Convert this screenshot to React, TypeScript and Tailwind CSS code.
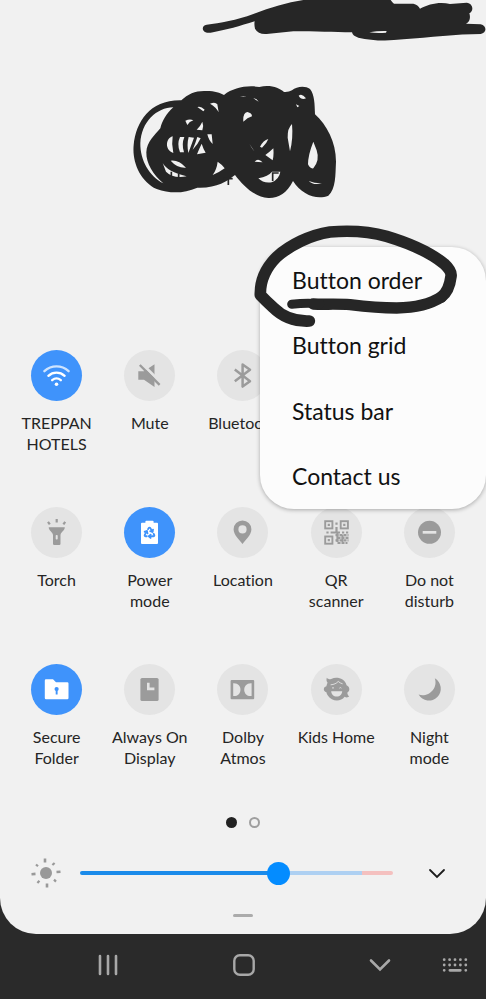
import { useState, type ReactNode } from "react";
import { Recycle } from "lucide-react";

type Tile = {
  id: string;
  label: string;
  on?: boolean;
  icon: ReactNode;
};

const tiles: Tile[] = [
  {
    id: "wifi",
    label: "TREPPAN\nHOTELS",
    on: true,
    icon: (
      <g fill="none" stroke="white" strokeWidth="2.4" strokeLinecap="round">
        <path d="M13.4 21.2C20.5 14.8 30.5 14.8 37.6 21.2" opacity="0.75" />
        <path d="M17.4 25.8C22 21.6 29 21.6 33.6 25.8" />
        <path d="M21.2 30.2C23.8 28 27.2 28 29.8 30.2" />
        <circle cx="25.5" cy="34.3" r="1.8" fill="white" stroke="none" />
      </g>
    ),
  },
  {
    id: "mute",
    label: "Mute",
    icon: (
      <g>
        <path d="M14.3 21.3H20L30.5 14.2V37L20 29.7H14.3Z" fill="#9b9b9b" />
        <path d="M17.5 13.3L37.5 33.3" stroke="#e4e4e4" strokeWidth="3" />
        <path d="M15.8 15L35.6 34.8" stroke="#9b9b9b" strokeWidth="2.4" />
      </g>
    ),
  },
  {
    id: "bluetooth",
    label: "Bluetooth",
    icon: (
      <path
        d="M17.8 19.5L33 31.3L25.6 36.6V14.4L33 19.7L17.8 31.3"
        fill="none"
        stroke="#9b9b9b"
        strokeWidth="2.5"
        strokeLinejoin="round"
      />
    ),
  },
  {
    id: "torch",
    label: "Torch",
    icon: (
      <g fill="#9b9b9b">
        <path d="M17.7 20.3H33.8C33.8 24 29.7 25 29.5 28V36.8Q29.5 38 28.3 38H23.2Q22 38 22 36.8V28C21.8 25 17.7 24 17.7 20.3Z" />
        <rect x="24.7" y="28" width="2" height="4.5" rx="0.8" fill="#e4e4e4" />
        <path
          d="M17 14.8L18.8 17.4M25.7 12V15.6M34.2 14.8L32.4 17.4"
          stroke="#9b9b9b"
          strokeWidth="2.2"
        />
      </g>
    ),
  },
  {
    id: "power",
    label: "Power\nmode",
    on: true,
    icon: (
      <g>
        <path
          d="M18 15.7H21.4V14.6Q21.4 13.7 22.3 13.7H28.7Q29.6 13.7 29.6 14.6V15.7H33Q34 15.7 34 16.7V36Q34 37 33 37H18Q17 37 17 36V16.7Q17 15.7 18 15.7Z"
          fill="white"
        />
        <Recycle x={19} y={19} width={13} height={13} color="#3f93fb" strokeWidth={3.4} />
      </g>
    ),
  },
  {
    id: "location",
    label: "Location",
    icon: (
      <path
        fillRule="evenodd"
        d="M25.5 37C22 32.5 16.6 28 16.6 22.3A8.9 8.9 0 0 1 34.4 22.3C34.4 28 29 32.5 25.5 37ZM25.5 18.3A4.1 4.1 0 1 0 25.5 26.5A4.1 4.1 0 1 0 25.5 18.3Z"
        fill="#9b9b9b"
      />
    ),
  },
  {
    id: "qr",
    label: "QR\nscanner",
    icon: (
      <g fill="#9b9b9b">
        <g fill="none" stroke="#9b9b9b" strokeWidth="1.9">
          <rect x="14.2" y="14.2" width="7.2" height="7.2" />
          <rect x="29.7" y="14.2" width="7.2" height="7.2" />
          <rect x="14.2" y="29.5" width="7.2" height="7.2" />
        </g>
        <path d="M16.7 16.7h2.2v2.2h-2.2zM32.2 16.7h2.2v2.2h-2.2zM16.7 32h2.2v2.2h-2.2z" />
        <path d="M24.4 15.6h2.2v2.2h-2.2zM24.4 20h2.2v4.6h-2.2zM15.4 24.4h2.2v2.2h-2.2zM19.6 24.4h9.4v2.2h-9.4zM31 24.4h2.2v2.2h-2.2zM35 24.4h2.2v2.2h-2.2z" />
        <path
          d="M24.5 28.2h13M26.5 30.8h11.5M24.5 33.4h13M26.5 36h10"
          stroke="#9b9b9b"
          strokeWidth="2.2"
          strokeDasharray="3 1"
        />
        <path d="M25.4 26h2v9h-2zM30.6 28h1.8v7h-1.8z" />
      </g>
    ),
  },
  {
    id: "dnd",
    label: "Do not\ndisturb",
    icon: (
      <g>
        <circle cx="25.5" cy="25.3" r="11.5" fill="#9b9b9b" />
        <rect x="18.7" y="24" width="13.6" height="2.7" fill="#e4e4e4" />
      </g>
    ),
  },
  {
    id: "folder",
    label: "Secure\nFolder",
    on: true,
    icon: (
      <g>
        <path
          d="M15 15.3H22L25 18.3H36.3Q37.5 18.3 37.5 19.5V34Q37.5 35.3 36.3 35.3H15Q13.8 35.3 13.8 34V16.5Q13.8 15.3 15 15.3Z"
          fill="white"
        />
        <circle cx="25.6" cy="25" r="2.1" fill="#3f93fb" />
        <rect x="24.7" y="26" width="1.9" height="4.5" fill="#3f93fb" />
      </g>
    ),
  },
  {
    id: "aod",
    label: "Always On\nDisplay",
    icon: (
      <g>
        <rect x="16.4" y="14" width="18.2" height="23" rx="1.6" fill="#9b9b9b" />
        <path d="M23 18.7H25.6V23.6H30.4V26.3H23Z" fill="#e4e4e4" />
      </g>
    ),
  },
  {
    id: "dolby",
    label: "Dolby\nAtmos",
    icon: (
      <g>
        <rect x="13.6" y="16" width="23.6" height="19.3" rx="1" fill="#9b9b9b" />
        <path
          d="M16.2 19.2C26 18.5 26 32.8 16.2 32.1ZM34.6 19.2C24.8 18.5 24.8 32.8 34.6 32.1Z"
          fill="#e4e4e4"
        />
      </g>
    ),
  },
  {
    id: "kids",
    label: "Kids Home",
    icon: (
      <g>
        <path
          d="M15.8 13.8C17.3 15.5 18.6 15.4 20.2 14.9C26 12.4 33.5 14.3 35.6 21.2C39 22.6 39.2 27.2 36.4 28.4C36.2 30.3 37.2 31.4 38.2 32.6C37 33.6 35 33.6 33.6 32.8C29.5 38.4 20.6 37.4 17 31.8C16 30.6 15.6 29.4 15.4 28.2C12 27.4 12 22.8 15.4 22.2C15.7 20.8 16 20 16.6 18.8C15.5 17.5 15.2 15.7 15.8 13.8Z"
          fill="#9b9b9b"
        />
        <path
          d="M20.2 27.2H31.2C31.2 30.2 28.8 32.6 25.7 32.6C22.6 32.6 20.2 30.2 20.2 27.2Z"
          fill="#e4e4e4"
        />
        <path
          d="M19.6 20.8C23 20.6 25.6 19.4 27.2 17.4C28.4 18.6 30 19.4 31.6 19.8M21 24.2Q22 23 23 24.2M28.4 24.2Q29.4 23 30.4 24.2"
          fill="none"
          stroke="#e4e4e4"
          strokeWidth="0.9"
        />
      </g>
    ),
  },
  {
    id: "night",
    label: "Night\nmode",
    icon: (
      <path
        d="M30.8 14.3A11.9 11.9 0 1 1 14.6 30.6C23.5 34 34.5 25 30.8 14.3Z"
        fill="#9b9b9b"
      />
    ),
  },
];

const menuItems = ["Button order", "Button grid", "Status bar", "Contact us"];

function TopScribble() {
  return (
    <svg
      className="absolute right-0 top-0 w-[296px] h-[50px]"
      viewBox="0 0 888 150"
      fill="#262626"
      aria-hidden="true"
    >
      <path d="M50 74C90 70 140 60 190 42C240 22 290 8 340 0H602Q606 6 612 11H670Q684 14 690 26C715 12 750 4 780 12L830 8C850 10 852 34 838 40C842 52 840 66 828 71L872 73C892 78 890 100 872 102C800 102 720 112 640 118C590 124 545 122 505 113Q488 108 486 97C430 97 380 94 310 94L230 102Q205 104 195 86Q192 74 194 64C150 78 110 90 62 98C34 102 32 76 50 74Z" />
      <path d="M538 97Q565 92 590 93L588 98Q560 100 538 97Z" fill="#f1f1f1" />
    </svg>
  );
}

function NameScribble() {
  return (
    <svg className="w-[226px] h-[130px]" viewBox="30 0 678 390" aria-hidden="true">
      <path
        fill="#262626"
        d="M184 76C205 55 230 46 260 48C285 48 300 54 312 60C340 38 380 30 418 36C450 28 478 38 492 51Q506 52 516 46C530 34 556 32 570 42C584 58 584 90 585 118C620 150 648 200 648 260C646 300 648 340 625 362C590 375 545 360 519 318C500 355 475 370 445 369C400 365 368 330 345 300C320 320 290 340 232 338C190 356 150 356 110 342C60 318 36 260 41 210C48 140 90 74 184 76Z"
      />
      <g fill="#f1f1f1">
        <path d="M160 97C110 98 64 140 61 205C60 255 88 305 130 325C100 300 78 265 79 232C80 200 105 180 121 160C126 138 140 115 160 97Z" />
        <path d="M158 184C136 190 134 226 160 234Q154 208 158 184ZM180 186Q170 208 180 232H192Q184 208 193 186ZM206 186Q200 208 205 234Q214 210 222 188ZM232 186Q226 206 218 224Q234 208 242 190Z" />
        <path d="M196 137Q210 130 220 136Q208 140 202 150ZM230 164Q240 156 247 140Q252 152 247 166ZM262 178H275L278 207Q266 196 262 178ZM231 238Q238 220 245 206Q250 222 257 233ZM152 257Q176 254 198 278Q172 280 152 257ZM128 264Q142 290 200 304Q160 312 138 290ZM278 300Q290 284 293 260Q306 268 314 280Q298 292 278 300Z" />
        <path d="M232 96Q242 92 254 104L250 109ZM270 86Q286 80 292 88L296 112Q288 96 270 86ZM360 65Q370 62 380 65ZM400 70Q410 70 416 80ZM370 140Q368 114 382 111Q396 114 396 124Q382 128 370 140ZM420 215Q430 196 445 192Q440 206 426 218ZM436 240Q450 230 460 220Q462 240 458 256ZM404 260Q414 248 428 262ZM388 206L404 230L396 220Z" />
        <path d="M516 147Q502 160 503 188L510 229Q520 190 516 147ZM536 62Q546 54 558 70Q544 76 536 62ZM528 88L538 93L532 97ZM580 200Q564 240 564 268Q570 282 580 280Q600 256 590 226ZM415 310Q445 304 456 290H481Q478 312 455 322Q430 326 415 310ZM566 318Q580 332 606 325Q586 326 566 318Z" />
      </g>
      <path
        d="M325 306V330M310 311H338M458 292V318M458 294H476M154 290V304M176 296V308"
        stroke="#262626"
        strokeWidth="5"
        fill="none"
      />
    </svg>
  );
}

function CircleMark() {
  return (
    <svg
      className="absolute -left-5 -top-8 w-[246px] h-[120px] pointer-events-none"
      viewBox="0 0 738 360"
      fill="none"
      stroke="#262626"
      strokeLinecap="round"
      strokeLinejoin="round"
      aria-hidden="true"
    >
      <path
        strokeWidth="35"
        d="M208 318C160 320 128 306 100 278Q78 258 61 240C60 200 76 160 110 126C150 90 210 60 270 51C330 46 390 50 440 64C500 82 570 112 612 146Q636 168 633 184C630 210 622 232 604 246"
      />
      <path
        strokeWidth="34"
        d="M604 246C570 268 520 278 470 279C420 279 370 274 330 269C290 266 250 269 220 267"
      />
      <path strokeWidth="27" d="M240 267C210 263 180 265 155 268" />
    </svg>
  );
}

function QuickTile({ tile }: { tile: Tile }) {
  const [on, setOn] = useState(!!tile.on);

  return (
    <button
      type="button"
      aria-pressed={on}
      onClick={() => setOn(!on)}
      className="flex flex-col items-center gap-[11px] h-[105px]"
    >
      <span
        className={`w-[51px] h-[51px] shrink-0 rounded-full ${
          on ? "bg-[#3f93fb]" : "bg-[#e4e4e4]"
        }`}
      >
        <svg viewBox="0 0 51 51" className="w-full h-full" aria-hidden="true">
          {tile.icon}
        </svg>
      </span>
      <span className="text-base leading-[21px] text-[#252525] whitespace-pre">
        {tile.label}
      </span>
    </button>
  );
}

function Brightness() {
  const [value, setValue] = useState(164);
  const percent = (value / 255) * 100;

  return (
    <div className="flex items-center pl-[30px] pr-[38px] h-8">
      <svg width="32" height="32" viewBox="0 0 32 32" aria-hidden="true">
        <circle cx="16" cy="16" r="6" fill="#999999" />
        <g stroke="#999999" strokeWidth="2.6">
          <path d="M15 1.5V5.5M17 26.5V30.5M1.5 17.2L5.5 16.9M26.5 15L30.5 14.7" />
          <path
            d="M6 7.5L8 9.3M22.4 8L24.6 6M7.4 26L9.4 23.8M24 22.6L26 24.6"
            strokeWidth="2.2"
          />
        </g>
      </svg>
      <input
        type="range"
        min={0}
        max={255}
        value={value}
        aria-label="Brightness"
        onChange={(e) => setValue(Number(e.target.value))}
        className="
          flex-1 min-w-0 ml-[18px] h-1 rounded-full appearance-none
          [&::-webkit-slider-thumb]:appearance-none
          [&::-webkit-slider-thumb]:w-[23px]
          [&::-webkit-slider-thumb]:h-[23px]
          [&::-webkit-slider-thumb]:rounded-full
          [&::-webkit-slider-thumb]:bg-[#048cff]
        "
        style={{
          background: `linear-gradient(to right, #1b8bea ${percent}%, #aed0f2 ${percent}%, #aed0f2 90%, #f4c0bf 90%)`,
        }}
      />
      <button type="button" aria-label="More" className="ml-[33px]">
        <svg width="22" height="22" viewBox="0 0 22 22" aria-hidden="true">
          <path
            d="M4 8L11 15L18 8"
            fill="none"
            stroke="#1c1c1c"
            strokeWidth="1.8"
            strokeLinecap="round"
          />
        </svg>
      </button>
    </div>
  );
}

function NavBar() {
  return (
    <nav className="h-[65px] pb-1 pl-[92px] pr-[15px] flex items-center justify-between">
      <button type="button" aria-label="Recents">
        <svg width="32" height="32" viewBox="0 0 32 32" aria-hidden="true">
          <path
            d="M8 7V25M16 7V25M24 7V25"
            stroke="#a8a8a8"
            strokeWidth="2.6"
            strokeLinecap="round"
          />
        </svg>
      </button>
      <button type="button" aria-label="Home">
        <svg width="32" height="32" viewBox="0 0 32 32" aria-hidden="true">
          <rect
            x="6.3"
            y="6.3"
            width="19.4"
            height="19.4"
            rx="5.5"
            fill="none"
            stroke="#a8a8a8"
            strokeWidth="2.4"
          />
        </svg>
      </button>
      <div className="flex gap-[43px]">
        <button type="button" aria-label="Hide keyboard">
          <svg width="32" height="32" viewBox="0 0 32 32" aria-hidden="true">
            <path
              d="M7 11.5L16 20.5L25 11.5"
              fill="none"
              stroke="#a8a8a8"
              strokeWidth="2.6"
              strokeLinecap="round"
            />
          </svg>
        </button>
        <button type="button" aria-label="Keyboard">
          <svg width="32" height="32" viewBox="0 0 32 32" aria-hidden="true">
            <g
              stroke="#a8a8a8"
              strokeWidth="2.8"
              strokeLinecap="round"
              fill="none"
            >
              <path d="M5.2 10.7h22" strokeDasharray="0 5.4" />
              <path d="M5.2 16h22" strokeDasharray="0 5.4" />
              <path d="M5.2 21.3h0M26.8 21.3h0M10.9 21.3h10.4" />
            </g>
          </svg>
        </button>
      </div>
    </nav>
  );
}

export default function App() {
  return (
    <div className="relative min-h-screen flex flex-col bg-[#2a2a2a] font-['Lato',sans-serif] [font-variant-ligatures:none]">
      <main className="relative flex-1 flex flex-col bg-[#f1f1f1] rounded-b-[36px]">
        <TopScribble />

        <div className="flex justify-center pt-[75px]">
          <NameScribble />
        </div>

        <div className="mt-[145px] px-[10px] flex flex-col gap-[52px]">
          <div className="grid grid-cols-5">
            {tiles.slice(0, 3).map((tile) => (
              <QuickTile key={tile.id} tile={tile} />
            ))}
          </div>
          <div className="grid grid-cols-5 gap-y-[52px]">
            {tiles.slice(3).map((tile) => (
              <QuickTile key={tile.id} tile={tile} />
            ))}
          </div>
        </div>

        <div className="flex justify-center gap-3 mt-12">
          <span className="w-[11px] h-[11px] rounded-full bg-[#222222]" />
          <span className="w-[11px] h-[11px] rounded-full border-2 border-[#9f9f9f]" />
        </div>

        <div className="mt-[29px]">
          <Brightness />
        </div>

        <div className="mt-auto mb-[17px] mx-auto w-5 h-[3px] rounded-full bg-[#ababab]" />
      </main>

      <NavBar />

      <div className="absolute right-0 top-[247px] w-[226px]">
        <ul className="bg-[#fcfcfc] rounded-[34px] shadow-[0_1px_4px_rgba(0,0,0,0.3)] h-[262px] grid grid-rows-4">
          {menuItems.map((item) => (
            <li key={item} className="flex">
              <button
                type="button"
                className="w-full pl-8 text-left text-[23px] text-[#111111]"
              >
                {item}
              </button>
            </li>
          ))}
        </ul>
        <CircleMark />
      </div>
    </div>
  );
}
